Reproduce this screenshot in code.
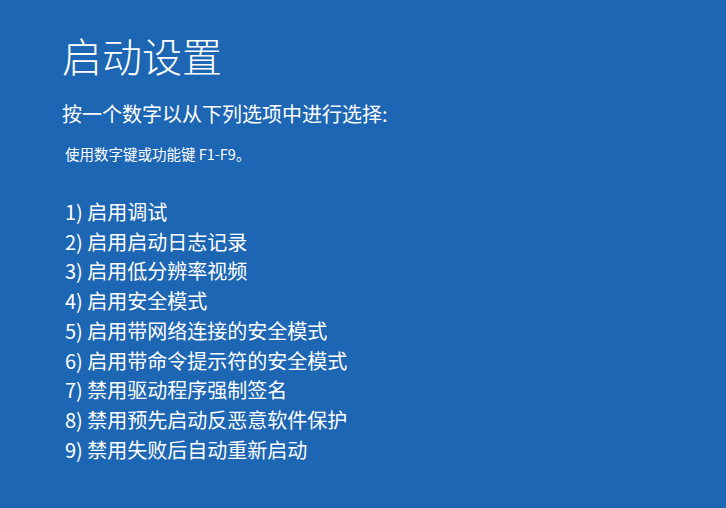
const OPTIONS = [
  "启用调试",
  "启用启动日志记录",
  "启用低分辨率视频",
  "启用安全模式",
  "启用带网络连接的安全模式",
  "启用带命令提示符的安全模式",
  "禁用驱动程序强制签名",
  "禁用预先启动反恶意软件保护",
  "禁用失败后自动重新启动",
];

export default function App() {
  return (
    <div
      className="h-[508px] w-[726px] overflow-hidden bg-[#1d66b4] pl-[62px] text-white"
      style={{ fontFamily: '"Noto Sans CJK SC", "Noto Sans", sans-serif' }}
    >
      <h1 className="pt-[28px] text-[40px] font-light leading-[54px]">启动设置</h1>
      <p className="mt-[19px] text-[20px] leading-[26px]">按一个数字以从下列选项中进行选择:</p>
      <p className="mt-[17px] pl-[3px] text-[14.5px] leading-[20px]">使用数字键或功能键 F1-F9。</p>
      <ol className="mt-[33px] pl-[3px] text-[20px] leading-[29.7px]">
        {OPTIONS.map((label, i) => (
          <li key={i}>
            {i + 1}) {label}
          </li>
        ))}
      </ol>
    </div>
  );
}
